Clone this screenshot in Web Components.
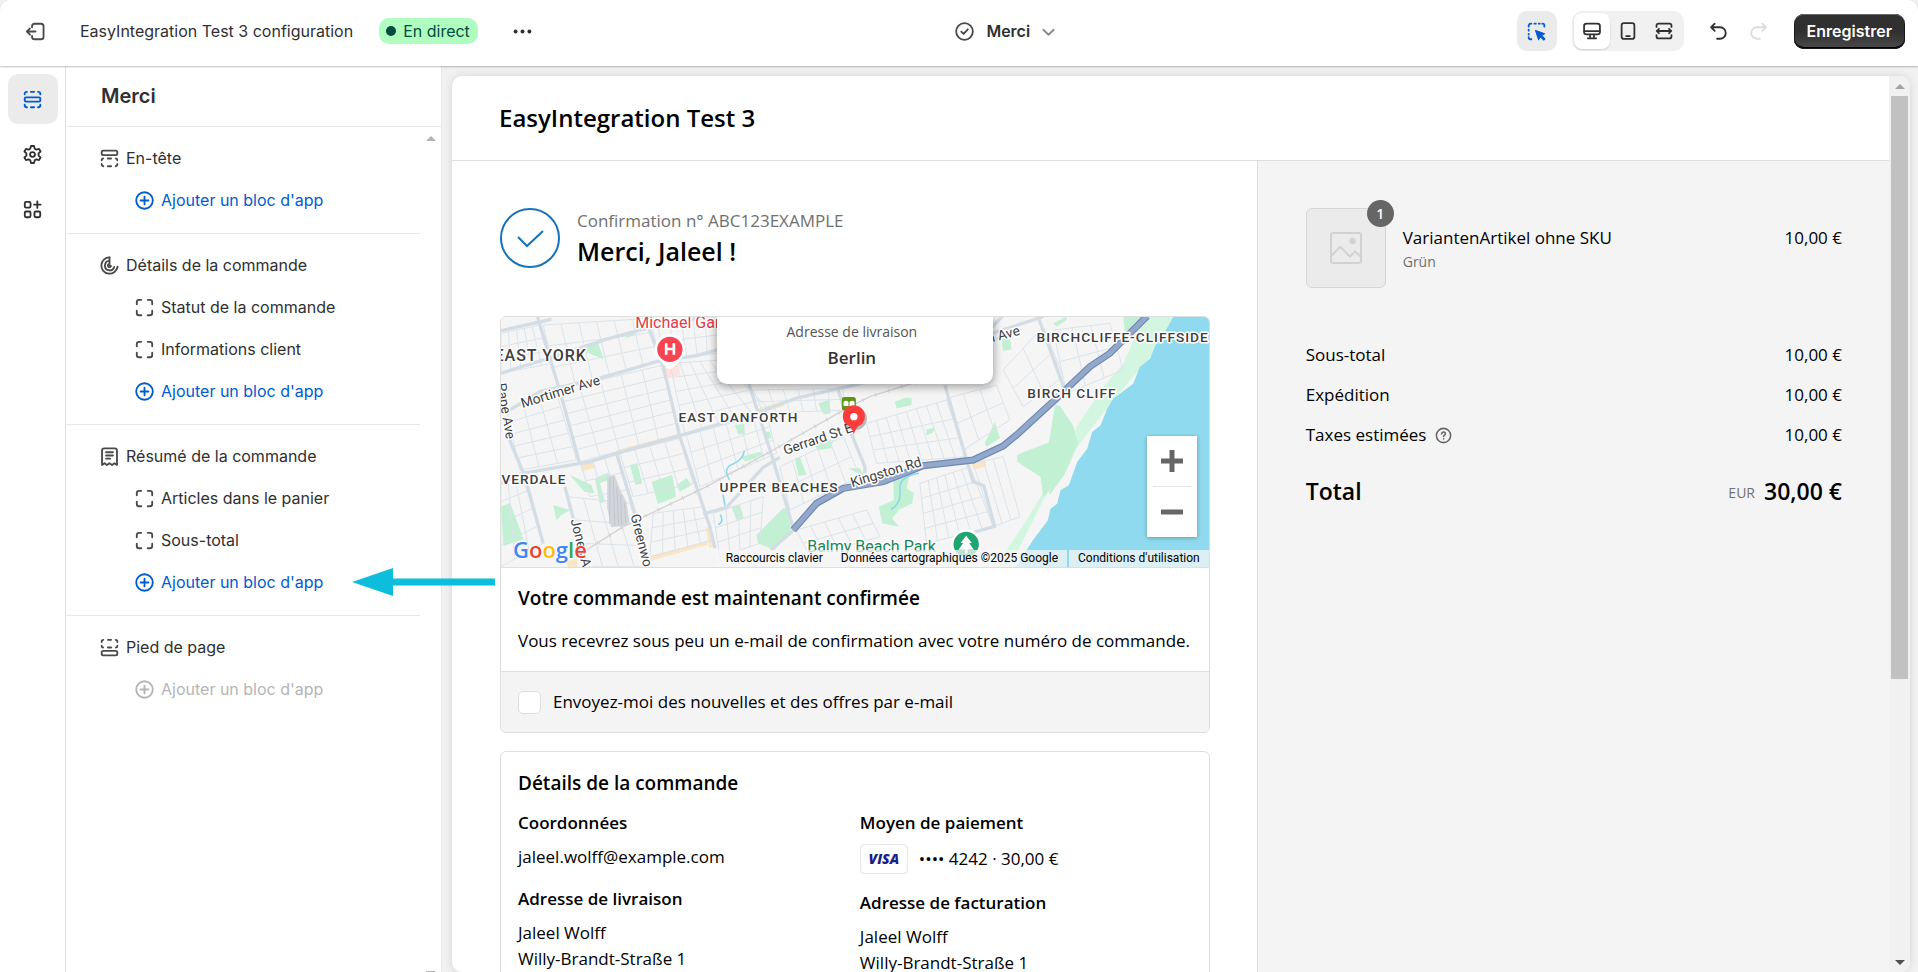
<!DOCTYPE html>
<html lang="fr">
<head>
<meta charset="utf-8">
<meta name="viewport" content="width=device-width, initial-scale=1">
<title>EasyIntegration Test 3 configuration</title>
<style>
  html, body {
    height: 100%;
    margin: 0;
  }

  body {
    overflow: hidden;
    background: #f1f1f1;
    font-family: Inter, "Liberation Sans", sans-serif;
    font-size: 16px;
    color: #303030;
  }
</style>
</head>
<body>
<theme-editor></theme-editor>

<script>
const ICONS = {
  exit: `<path d="M2.500 10h7.500M5.200 7.300 2.500 10l2.700 2.700"/><path d="M7 6.200V5.500a2.250 2.250 0 0 1 2.250-2.250h5.500A2.250 2.250 0 0 1 17 5.500v9a2.250 2.250 0 0 1-2.250 2.250h-5.500A2.250 2.250 0 0 1 7 14.500v-.7"/>`,
  dots: `<g fill="currentColor" stroke="none"><circle cx="4" cy="10" r="1.700"/><circle cx="10" cy="10" r="1.700"/><circle cx="16" cy="10" r="1.700"/></g>`,
  check: `<circle cx="10" cy="10" r="7.250"/><path d="m7.200 10.100 2 2 3.700-4"/>`,
  chevron: `<path d="m5.500 8.500 4.500 4.300 4.500-4.300"/>`,
  sections: `<rect x="3.200" y="8.200" width="13.600" height="3.600" rx="1.200"/><path d="M3.200 5.500v-.4c0-1 .8-1.800 1.800-1.800h.2M8.600 3.300h2.800M14.800 3.300h.2c1 0 1.800.8 1.800 1.800v.4M3.200 14.500v.4c0 1 .8 1.800 1.800 1.800h.2M8.600 16.700h2.800M14.800 16.700h.2c1 0 1.800-.8 1.800-1.800v-.4"/>`,
  gear: `<circle cx="10" cy="10" r="2.100"/><path d="M8.700 2.600h2.600l.6 2.300 1.500.9 2.300-.7 1.300 2.300-1.700 1.600v2l1.700 1.600-1.300 2.300-2.300-.7-1.500.9-.6 2.300H8.700l-.6-2.300-1.500-.9-2.300.7L3 12.600 4.700 11V9L3 7.400l1.300-2.300 2.300.7 1.500-.9z"/>`,
  apps: `<rect x="3.300" y="3.300" width="5" height="5" rx="1.200"/><rect x="3.300" y="11.700" width="5" height="5" rx="1.200"/><rect x="11.700" y="11.700" width="5" height="5" rx="1.200"/><path d="M14.200 3v5.600M11.400 5.800H17"/>`,
  header: `<rect x="3.200" y="3.200" width="13.600" height="3.800" rx="1.400"/><path d="M3.200 11.600v-.2c0-.9.500-1.400 1.200-1.400M8.600 10h2.800M15.600 10c.7 0 1.200.5 1.200 1.400v.2M3.200 14.700v.4c0 .9.600 1.600 1.400 1.600M8.600 16.700h2.800M15.400 16.700c.8 0 1.400-.7 1.400-1.600v-.4"/>`,
  footer: `<rect x="3.200" y="13" width="13.600" height="3.800" rx="1.400"/><path d="M3.200 8.400v.2c0 .9.500 1.400 1.200 1.400M8.600 10h2.800M15.600 10c.7 0 1.200-.5 1.200-1.400v-.2M3.200 5.300v-.4c0-.9.600-1.600 1.400-1.600M8.600 3.300h2.800M15.400 3.300c.8 0 1.400.7 1.400 1.600v.4"/>`,
  details: `<path d="M10 3v6.900"/><path d="M10 2.900a7.100 7.100 0 1 0 7 8.200"/><path d="M9.800 6a4.100 4.100 0 1 0 4.300 5.200"/><path d="M9 9a1.400 1.400 0 1 0 2.300 1.400"/>`,
  receipt: `<path d="M3.500 17.400V4.900c0-1.100.9-2 2-2h9c1.100 0 2 .9 2 2v12.500l-2.200-1.500-2.100 1.500-2.200-1.500-2.200 1.500-2.100-1.500z"/><path d="M7 6.300h6M7 9.100h6M7 11.900h3.600"/>`,
  block: `<path d="M3.300 7.200V5.300c0-1.100.9-2 2-2h1.900M12.800 3.300h1.900c1.100 0 2 .9 2 2v1.900M16.700 12.800v1.900c0 1.100-.9 2-2 2h-1.900M7.200 16.700H5.300c-1.100 0-2-.9-2-2v-1.900"/>`,
  add: `<circle cx="10" cy="10" r="7.200"/><path d="M10 6.600v6.800M6.600 10h6.800"/>`,
  inspect: `<path d="M3.200 5.700v-.8c0-.9.700-1.700 1.700-1.700h.6M8.200 3.200h1.200M12 3.200h.8M15 3.200h.6c.7 0 1.200.6 1.200 1.400v1.100M3.200 8.300v1M3.200 12v.6M3.200 15v.5c0 .7.600 1.200 1.300 1.200h1"/><path fill="currentColor" stroke-width="1" d="m9.200 9.200 7.800 2.700-2.700 1.500 3 3-1 1-3-3-1.500 2.700z"/>`,
  desktop: `<rect x="2.800" y="3.300" width="14.400" height="9.700" rx="2.200"/><path d="M3 10.200h14M8.200 13.200v3M11.800 13.200v3M6.200 16.700h7.600"/>`,
  phone: `<rect x="4.200" y="2.800" width="11.600" height="14.400" rx="2"/><path d="M8.300 14.600h3.400"/>`,
  fullwidth: `<path d="M3.200 6.300V5c0-1 .8-1.800 1.800-1.800h10c1 0 1.800.8 1.800 1.800v1.300M3.200 13.700V15c0 1 .8 1.800 1.800 1.800h10c1 0 1.800-.8 1.800-1.800v-1.300M3.400 10h13.200M5.400 8 3.400 10l2 2M14.600 8l2 2-2 2"/>`,
  undo: `<path d="M6.700 3.200 3.600 6.300l3.100 3.100M3.900 6.300h7.400a5 5 0 0 1 0 10H8.800"/>`,
  redo: `<path d="m13.300 3.200 3.100 3.100-3.100 3.100M16.100 6.300H8.700a5 5 0 0 0 0 10h2.500"/>`,
  help: `<circle cx="10" cy="10" r="7.500"/><path d="M8 8.300c0-1.100.9-1.900 2-1.900s2 .8 2 1.800c0 1.300-1.900 1.400-1.900 2.900M10.100 13.400v.3"/>`,
  image: `<rect x="2.500" y="2.500" width="15" height="15" rx="1"/><path d="m2.800 13.800 4.300-4.500 4.800 5 2.700-2.600 2.700 2.500"/><circle cx="13.300" cy="6.500" r="1.100" fill="currentColor"/>`
};

class UiIcon extends HTMLElement {
  constructor() {
    super();
    this.attachShadow({ mode: "open" });
  }

  connectedCallback() {
    this.shadowRoot.innerHTML = `
      <style>
        :host {
          display: inline-flex;
          flex: none;
          width: var(--icon-size, 23px);
          height: var(--icon-size, 23px);
        }

        svg {
          width: 100%;
          height: 100%;
          fill: none;
          stroke: currentColor;
          stroke-width: var(--icon-stroke, 1.6);
          stroke-linecap: round;
          stroke-linejoin: round;
        }
      </style>
      <svg viewBox="0 0 20 20" aria-hidden="true">${ICONS[this.getAttribute("name")] || ""}</svg>
    `;
  }
}

customElements.define("ui-icon", UiIcon);

class EditorTopbar extends HTMLElement {
  constructor() {
    super();
    this.attachShadow({ mode: "open" });
  }

  connectedCallback() {
    this.shadowRoot.innerHTML = `
      <style>
        :host {
          display: grid;
          grid-template-columns: 11fr auto 10fr;
          align-items: center;
          height: 66px;
          box-sizing: border-box;
          padding: 0 13px 4px 24px;
          background: #fff;
          border-radius: 10px 10px 0 0;
          box-shadow: 0 1px 2px rgba(0, 0, 0, 0.25);
          position: relative;
          z-index: 3;
        }

        button {
          display: inline-flex;
          align-items: center;
          justify-content: center;
          padding: 0;
          border: 0;
          background: none;
          color: #303030;
          font: inherit;
        }

        .left, .right {
          display: flex;
          align-items: center;
        }

        .right {
          justify-content: flex-end;
        }

        .exit {
          color: #4a4a4a;
          margin-right: 33px;
        }

        .badge {
          display: inline-flex;
          align-items: center;
          gap: 7px;
          height: 26px;
          padding: 0 8px 0 7px;
          margin: 0 33px 0 26px;
          border-radius: 10px;
          background: #affebf;
          color: #014b40;
        }

        .badge::before {
          content: "";
          width: 10px;
          height: 10px;
          border-radius: 5px;
          background: #014b40;
        }

        .page {
          gap: 10px;
          font-weight: 600;
        }

        .page ui-icon {
          color: #4a4a4a;
        }

        .page ui-icon:last-child {
          color: #8a8a8a;
          margin-left: -3px;
        }

        .inspect {
          width: 40px;
          height: 40px;
          border-radius: 10px;
          background: #ebebeb;
          color: #005bd3;
        }

        .devices {
          display: flex;
          align-items: center;
          margin: 0 15px;
          padding: 2px;
          border-radius: 10px;
          background: #f1f1f1;
          --icon-size: 22px;
        }

        .devices button {
          width: 36px;
          height: 36px;
          border-radius: 8px;
        }

        .devices button[aria-pressed="true"] {
          background: #fff;
          box-shadow: 0 1px 2px rgba(0, 0, 0, 0.15);
        }

        .history {
          width: 40px;
          height: 40px;
        }

        .history:disabled {
          color: #dcdcdc;
        }

        .save {
          height: 35px;
          margin-left: 15px;
          padding: 0 13px;
          border-radius: 10px;
          background: linear-gradient(#303030 50%, #4a4a4a);
          box-shadow: inset 0 1px 0 #6a6a6a, inset 0 0 0 1px #1a1a1a, inset 0 -2px 0 #000;
          color: #fff;
          font-weight: 600;
        }
      </style>
      <div class="left">
        <button class="exit" aria-label="Quitter"><ui-icon name="exit"></ui-icon></button>
        <span>EasyIntegration Test 3 configuration</span>
        <span class="badge">En direct</span>
        <button aria-label="Plus d'actions"><ui-icon name="dots"></ui-icon></button>
      </div>
      <button class="page"><ui-icon name="check"></ui-icon>Merci<ui-icon name="chevron"></ui-icon></button>
      <div class="right">
        <button class="inspect" aria-label="Inspecteur"><ui-icon name="inspect"></ui-icon></button>
        <div class="devices">
          <button aria-label="Ordinateur" aria-pressed="true"><ui-icon name="desktop"></ui-icon></button>
          <button aria-label="Mobile" aria-pressed="false"><ui-icon name="phone"></ui-icon></button>
          <button aria-label="Pleine largeur" aria-pressed="false"><ui-icon name="fullwidth"></ui-icon></button>
        </div>
        <button class="history" aria-label="Annuler"><ui-icon name="undo"></ui-icon></button>
        <button class="history" aria-label="Rétablir" disabled><ui-icon name="redo"></ui-icon></button>
        <button class="save">Enregistrer</button>
      </div>
    `;
  }
}

customElements.define("editor-topbar", EditorTopbar);

class EditorRail extends HTMLElement {
  constructor() {
    super();
    this.attachShadow({ mode: "open" });
  }

  connectedCallback() {
    this.shadowRoot.innerHTML = `
      <style>
        :host {
          display: block;
          width: 65px;
          box-sizing: content-box;
          border-right: 1px solid #e3e3e3;
          background: #fff;
        }

        nav {
          display: flex;
          flex-direction: column;
          align-items: center;
          gap: 5px;
          padding-top: 8px;
        }

        button {
          display: flex;
          align-items: center;
          justify-content: center;
          width: 50px;
          height: 50px;
          padding: 0;
          border: 0;
          border-radius: 10px;
          background: none;
          color: #303030;
        }

        button[aria-current] {
          background: #ebebeb;
          color: #005bd3;
        }
      </style>
      <nav>
        <button aria-label="Sections" aria-current="page"><ui-icon name="sections"></ui-icon></button>
        <button aria-label="Paramètres"><ui-icon name="gear"></ui-icon></button>
        <button aria-label="Applications"><ui-icon name="apps"></ui-icon></button>
      </nav>
    `;
  }
}

customElements.define("editor-rail", EditorRail);

class TreeRow extends HTMLElement {
  constructor() {
    super();
    this.attachShadow({ mode: "open" });
  }

  connectedCallback() {
    const disabled = this.hasAttribute("disabled") ? "disabled" : "";

    this.shadowRoot.innerHTML = `
      <style>
        :host {
          display: block;
          position: relative;
        }

        button {
          display: flex;
          align-items: center;
          gap: 5px;
          width: 100%;
          height: 42px;
          padding: 0 0 0 67px;
          border: 0;
          background: none;
          color: #303030;
          font: inherit;
          text-align: left;
        }

        ui-icon {
          color: #4a4a4a;
        }

        :host([kind="section"]) button {
          padding-left: 32px;
        }

        :host([kind="add"]) button,
        :host([kind="add"]) ui-icon {
          color: #005bd3;
        }

        :host([kind="add"]) button:disabled,
        :host([kind="add"]) button:disabled ui-icon {
          color: #b5b5b5;
        }

        /* pointer laid over the preview */
        .pointer {
          display: none;
          position: absolute;
          left: 286px;
          top: 7px;
          width: 143px;
          height: 28px;
        }

        :host([pointed]) .pointer {
          display: block;
        }
      </style>
      <button ${disabled}><ui-icon name="${this.getAttribute("icon")}"></ui-icon><slot></slot></button>
      <svg class="pointer" viewBox="0 0 143 28" aria-hidden="true">
        <path d="M0 14 41 0v10.500h102v7H41V28z" fill="#0dbddc"/>
      </svg>
    `;
  }
}

customElements.define("tree-row", TreeRow);

class SectionTree extends HTMLElement {
  constructor() {
    super();
    this.attachShadow({ mode: "open" });
  }

  connectedCallback() {
    this.shadowRoot.innerHTML = `
      <style>
        :host {
          display: flex;
          flex-direction: column;
          width: 375px;
          border-right: 1px solid #e8e8e8;
          background: #fff;
          position: relative;
          z-index: 2;
        }

        h2 {
          margin: 0;
          padding: 0 35px;
          border-bottom: 1px solid #e8e8e8;
          font-size: 20px;
          line-height: 60px;
          font-weight: 600;
        }

        .body {
          display: flex;
          flex: 1;
          justify-content: space-between;
        }

        .groups {
          flex: 1;
        }

        section {
          padding: 10px 0 12px;
          border-bottom: 1px solid #e8e8e8;
        }

        section:last-child {
          border-bottom: 0;
        }

        .track {
          display: flex;
          flex-direction: column;
          justify-content: space-between;
          align-items: center;
          width: 21px;
          padding-top: 9px;
        }

        .track::before {
          content: "";
          border: 5px solid transparent;
          border-top-width: 0;
          border-bottom-color: #b2b2b2;
        }

        .track::after {
          content: "";
          width: 9px;
          height: 1px;
          background: #b2b2b2;
        }
      </style>
      <h2>Merci</h2>
      <div class="body">
        <div class="groups">
          <section>
            <tree-row kind="section" icon="header">En-tête</tree-row>
            <tree-row kind="add" icon="add">Ajouter un bloc d'app</tree-row>
          </section>
          <section>
            <tree-row kind="section" icon="details">Détails de la commande</tree-row>
            <tree-row icon="block">Statut de la commande</tree-row>
            <tree-row icon="block">Informations client</tree-row>
            <tree-row kind="add" icon="add">Ajouter un bloc d'app</tree-row>
          </section>
          <section>
            <tree-row kind="section" icon="receipt">Résumé de la commande</tree-row>
            <tree-row icon="block">Articles dans le panier</tree-row>
            <tree-row icon="block">Sous-total</tree-row>
            <tree-row kind="add" icon="add" pointed>Ajouter un bloc d'app</tree-row>
          </section>
          <section>
            <tree-row kind="section" icon="footer">Pied de page</tree-row>
            <tree-row kind="add" icon="add" disabled>Ajouter un bloc d'app</tree-row>
          </section>
        </div>
        <div class="track"></div>
      </div>
    `;
  }
}

customElements.define("section-tree", SectionTree);

// Minor streets: straight lines across a quad [a, b, c, d], clockwise from top left
function streets([a, b, c, d], across, down) {
  const mix = (p, q, t) => [Math.round(p[0] + (q[0] - p[0]) * t), Math.round(p[1] + (q[1] - p[1]) * t)];
  let path = "";
  for (let i = 0; i <= across; i++) {
    path += `M${mix(a, b, i / across)}L${mix(d, c, i / across)}`;
  }
  for (let i = 0; i <= down; i++) {
    path += `M${mix(a, d, i / down)}L${mix(b, c, i / down)}`;
  }
  return path;
}

const STREETS = [
  streets([[33, 70], [150, 45], [185, 160], [33, 190]], 5, 3),
  streets([[160, 45], [480, 25], [510, 150], [205, 235]], 6, 3),
  streets([[500, 40], [683, 20], [683, 130], [530, 150]], 5, 2),
  streets([[205, 240], [520, 165], [565, 375], [270, 455]], 5, 6),
  streets([[50, 300], [200, 250], [260, 450], [90, 480]], 3, 5),
  streets([[540, 160], [690, 150], [840, 300], [585, 370]], 5, 5),
  streets([[275, 465], [380, 435], [410, 540], [300, 560]], 3, 2),
  streets([[390, 430], [570, 385], [610, 520], [430, 560]], 4, 3),
  streets([[33, 510], [95, 490], [160, 700], [33, 770]], 3, 4),
  streets([[235, 560], [420, 580], [480, 770], [290, 770]], 4, 3),
  streets([[490, 610], [640, 590], [670, 690], [480, 740]], 5, 3),
  streets([[590, 375], [830, 310], [860, 430], [630, 530]], 6, 3),
  streets([[670, 610], [820, 560], [810, 700], [690, 740]], 4, 3),
  streets([[870, 470], [1060, 380], [1110, 500], [900, 600]], 5, 2),
  streets([[790, 240], [1060, 235], [1060, 300], [820, 310]], 6, 2),
  streets([[1130, 340], [1370, 270], [1430, 440], [1160, 460]], 8, 3),
  streets([[1290, 520], [1440, 470], [1510, 650], [1310, 700]], 6, 4),
  streets([[1450, 460], [1540, 440], [1590, 620], [1510, 650]], 3, 1),
  streets([[1370, 265], [1520, 225], [1560, 330], [1420, 420]], 3, 2),
  streets([[1540, 180], [1660, 50], [1720, 200], [1600, 290]], 2, 2),
  streets([[1690, 60], [1860, 40], [1900, 180], [1730, 250]], 3, 2),
  streets([[920, 660], [1130, 600], [1170, 680], [960, 740]], 5, 2)
].join("");

class OrderMap extends HTMLElement {
  constructor() {
    super();
    this.attachShadow({ mode: "open" });
  }

  connectedCallback() {
    this.shadowRoot.innerHTML = `
      <style>
        :host {
          display: block;
          position: relative;
          height: 250px;
          overflow: hidden;
          background: #f5f5f5;
          font-family: Roboto, "Liberation Sans", sans-serif;
        }

        .map {
          display: block;
          width: 100%;
          height: 100%;
        }

        .map text {
          fill: #3c4043;
          stroke: #fff;
          stroke-width: 9px;
          stroke-linejoin: round;
          paint-order: stroke;
          font-size: 41px;
        }

        .map .area {
          font-weight: 500;
          letter-spacing: 3px;
        }

        .map .district,
        .map .place {
          font-size: 48px;
        }

        .map .park {
          fill: #16855a;
        }

        .map .hospital {
          fill: #e23b4b;
        }

        .bubble {
          position: absolute;
          top: 0;
          left: 50%;
          width: 276px;
          height: 67px;
          margin-left: -138px;
          box-sizing: border-box;
          padding: 2px 6px 0 0;
          border-radius: 0 0 10px 10px;
          background: #fff;
          box-shadow: 0 2px 8px 1px rgba(0, 0, 0, 0.35);
          color: #545454;
          font-family: "Open Sans", "Noto Sans", sans-serif;
          font-size: 14px;
          line-height: 26px;
          text-align: center;
        }

        .bubble strong {
          display: block;
          color: #333;
          font-size: 17px;
          font-weight: 600;
        }

        .zoom {
          position: absolute;
          right: 12px;
          bottom: 30px;
          width: 50px;
          background: #fff;
          box-shadow: 0 1px 4px rgba(0, 0, 0, 0.3);
        }

        .zoom button {
          display: flex;
          align-items: center;
          justify-content: center;
          width: 50px;
          height: 50px;
          padding: 0;
          border: 0;
          background: none;
          color: #666;
        }

        .zoom hr {
          height: 1px;
          margin: 0 6px;
          border: 0;
          background: #e6e6e6;
        }

        .google {
          position: absolute;
          left: 12px;
          bottom: 2px;
          color: #4285f4;
          font-family: "Open Sans", sans-serif;
          font-size: 22px;
          font-weight: 600;
          line-height: 32px;
          text-decoration: none;
          text-shadow: 0 0 2px #fff, 0 0 2px #fff, 0 0 3px #fff;
        }

        .r { color: #ea4335; }
        .y { color: #fbbc05; }
        .g { color: #34a853; }
        .b { color: #4285f4; }

        .credits {
          position: absolute;
          right: 0;
          bottom: 0;
          display: flex;
          gap: 2px;
          font-size: 12px;
          line-height: 17px;
          color: #000;
        }

        .credits > * {
          padding: 0 9px;
          border: 0;
          background: rgba(245, 245, 245, 0.75);
          color: #000;
          font: inherit;
          text-decoration: none;
        }

        .credits .keys {
          margin-right: -2px;
        }
      </style>
      <svg class="map" viewBox="33 21 2124 750" preserveAspectRatio="xMidYMid slice" role="img" aria-label="Plan">
        <rect x="0" y="0" width="2200" height="800" fill="#f5f5f5"/>
        <g fill="#c1f0d3">
          <path d="M405 70l28-8 2 14-26 8zM285 105l40-8 15 50-50-20zM33 590l28-12 40 110-60 20zM240 495l65 30 8 25-30-5zM315 505l45-20-5 25-25 10 15 55-15 5zM420 465l22-5 15 60-20 5zM485 515l62-20 12 65-55 22zM560 525l30-20 15 20-35 20zM190 585l50 15-25 15-15 15zM735 345l28-2 2 30-20 0zM985 280l32-10 6 40-22 3zM970 405l60-15-5 25-40 5zM915 445l15-5 20 55-25 2zM800 675l80-80 12 0 12 65-50 60-50-20zM725 590l25-5 12 40-22 5zM752 440l60-15 5 10-50 20zM825 365l15 0 5 20-15 2zM1075 475l35 0 15 25-20-10z"/>
          <path d="M1215 275l30-12 20 0 0 22-45 10zM1310 358l24-5-5 15-20 8zM1485 400l30-65 15 50-40 25zM1535 90l25-12 5 40-25 5zM1900 21l65 0-20 30-40 15zM1690 40l40-20 0 10-30 20zM1695 285l15 2 40 60 15 55-40 90-45 62-10-60-20-15-62-25 0-22 90-35zM1210 500l50-5-10 40 22 15-5 30-40 20-20 25 20 25-50-10-10-50 45-20z"/>
        </g>
        <path fill="#d3f6e1" d="M1960 21h100l-80 120-110 130-100 130-110 170-100 200h-20l10-50 60-90 60-100 60-100 30-80 80-120 60-70 40-90z"/>
        <path fill="#c1f0d3" d="M1700 290l45 50 20 60-60 110-45 50-8-60-70-45 0-20 95-35z"/>
        <path fill="#8fdaee" d="M2050 21l-25 45-20 20-25 60-30 25-20 50-60 45-18 30-20 50-25 20-15 50-30 40-25 70-25 15-10 40-20 15-8 35-45 60-45 70-30 30-20 55H2160V21z"/>
        <path fill="#fae6c4" d="M380 420l190-50 4 14-190 50zM270 460l40-6 4 20-38 10zM800 296l80-22 4 14-80 22zM1443 455l42-6 6 20-40 10zM480 740l170-48 4 12-170 48zM648 652l12-2 10 60-12 4zM230 755l30-8 4 24h-30z"/>
        <path fill="#ffe2e0" d="M512 168l52-16 8 44-48 10z"/>

        <path fill="none" stroke="#dbe3ea" stroke-width="3" d="${STREETS}"/>

        <g fill="none" stroke="#d3dde5" stroke-width="10">
          <path d="M33 62 185 28M33 190l165-52 150-50 110-30 190-38"/>
          <path d="M60 300l90-55 180-40 170-50 120-18 70-20M33 520l67-30 200-35 80-25 190-53 230-68 120-45 180-40 270-65 90-30 30-60 90-95 40-15"/>
          <path d="M143 21l72 239 54 200M380 430l55 180 50 170M475 50l45 120 50 210 90 270 15 65M775 215l75 235 62 210-70 60"/>
          <path d="M55 380l50 120 55 200M225 530l45 170 25 80M640 612l70-20 110-120 50-30"/>
          <path d="M1365 225l65 225 20 65 32 12 32 122-120 35M1645 21l78 215M1080 360l45 110v20M1045 240l45 140M1430 95l230-75"/>
        </g>
        <path fill="#d2d5da" d="M352 500l22-5 15 40 20 40 10 60-15 12-40 5-12-60z"/>
        <path fill="none" stroke="#c3c7cd" stroke-width="3" d="M360 502v140M370 500l5 145M381 530l5 115M393 555l2 90M404 580l4 60"/>
        <g fill="none" stroke="#d3d3d3" stroke-width="4">
          <path d="M290 720l110-70 250-120 200-110 230-130 60-30 160-50 140-80 100-55"/>
          <path stroke-width="12" stroke-dasharray="3 38" d="M290 720l110-70 250-120 200-110 230-130 60-30 160-50 140-80"/>
        </g>
        <g fill="none" stroke="#8cd9ee" stroke-width="5" stroke-linecap="round">
          <path d="M763 425q-5 25-35 38t-10 45M700 555l5 30M692 615q10 20-5 28M1285 490q-60 10-55 50t-25 57"/>
        </g>
        <path fill="none" stroke="#6f88b5" stroke-width="21" d="M910 660l70-80 80-45 120-20 120-48 150-17 90-42 40-33 120-110 100-95 60-40 112-112"/>
        <path fill="none" stroke="#93a9cc" stroke-width="14" d="M910 660l70-80 80-45 120-20 120-48 150-17 90-42 40-33 120-110 100-95 60-40 112-112"/>

        <g>
          <text class="area district" x="14" y="153">EAST YORK</text>
          <text class="area" x="566" y="337">EAST DANFORTH</text>
          <text class="area" x="20" y="521">IVERDALE</text>
          <text class="area" x="689" y="545">UPPER BEACHES</text>
          <text class="area" x="1640" y="97">BIRCHCLIFFE-CLIFFSIDE</text>
          <text class="area" x="1612" y="264">BIRCH CLIFF</text>
          <text transform="translate(98 294) rotate(-17)">Mortimer Ave</text>
          <text transform="translate(886 435) rotate(-19)">Gerrard St E</text>
          <text transform="translate(1087 532) rotate(-17)">Kingston Rd</text>
          <text transform="translate(1496 100) rotate(-15)">h Ave</text>
          <text transform="translate(20 222) rotate(80)">Pape Ave</text>
          <text transform="translate(242 630) rotate(76)">Jones Ave</text>
          <text transform="translate(422 616) rotate(76)">Greenwood</text>
          <text class="place hospital" x="436" y="53">Michael Garron</text>
          <text class="place park" x="952" y="727">Balmy Beach Park</text>
        </g>

        <path fill="#fff" d="M540 72a45 45 0 0 1 33 76l-24 25q-9 8-18 0l-24-25a45 45 0 0 1 33-76z"/>
        <circle cx="540" cy="118" r="38" fill="#f94552"/>
        <path stroke="#fff" stroke-width="8" fill="none" d="M529 100v34M552 100v34M529 117h23"/>
        <circle cx="1429" cy="703" r="45" fill="#fff"/>
        <circle cx="1429" cy="703" r="38" fill="#1ea672"/>
        <path fill="#fff" d="M1429 677l17 22h-8l14 20h-19v12h-8v-12h-19l14-20h-8z"/>
        <rect x="1056" y="261" width="42" height="40" rx="8" fill="#5f9416"/>
        <path fill="#fff" d="M1061 276q8-8 15 0v12h-15zM1079 276q8-8 15 0v12h-15z"/>
        <ellipse cx="1096" cy="326" rx="35" ry="34" fill="#000" opacity=".25"/>
        <path fill="#ff3c3c" d="M1092 373q-7-24-20-28a33 33 0 1 1 40 0q-13 4-20 28z"/>
        <circle cx="1092" cy="320" r="11" fill="#fff"/>
      </svg>
      <div class="bubble">Adresse de livraison<strong>Berlin</strong></div>
      <a class="google" href="#">G<span class="r">o</span><span class="y">o</span><span class="b">g</span><span class="g">l</span><span class="r">e</span></a>
      <div class="zoom">
        <button aria-label="Zoom avant"><svg width="22" height="22"><path d="M11 0v22M0 11h22" stroke="currentColor" stroke-width="5"/></svg></button>
        <hr>
        <button aria-label="Zoom arrière"><svg width="22" height="22"><path d="M0 11h22" stroke="currentColor" stroke-width="5"/></svg></button>
      </div>
      <div class="credits">
        <button class="keys">Raccourcis clavier</button>
        <span>Données cartographiques ©2025 Google</span>
        <a href="#">Conditions d'utilisation</a>
      </div>
    `;
  }
}

customElements.define("order-map", OrderMap);

class CheckoutCard extends HTMLElement {
  constructor() {
    super();
    this.attachShadow({ mode: "open" });
  }

  connectedCallback() {
    this.shadowRoot.innerHTML = `
      <style>
        :host {
          display: block;
          flex: none;
          border: 1px solid #dedede;
          border-radius: 6px;
          overflow: hidden;
          background: #fff;
        }
      </style>
      <slot></slot>
    `;
  }
}

customElements.define("checkout-card", CheckoutCard);

class OrderSummary extends HTMLElement {
  constructor() {
    super();
    this.attachShadow({ mode: "open" });
  }

  connectedCallback() {
    this.shadowRoot.innerHTML = `
      <style>
        :host {
          display: block;
          padding: 47px 47px 0 48px;
          border-left: 1px solid #dedede;
          background: #f4f4f4;
        }

        .product {
          display: flex;
          align-items: center;
          gap: 17px;
          margin-bottom: 54px;
        }

        .thumb {
          display: flex;
          align-items: center;
          justify-content: center;
          width: 80px;
          height: 80px;
          box-sizing: border-box;
          border: 1px solid #d6d6d6;
          border-radius: 6px;
          background: #ebebeb;
          color: #d2d2d2;
          position: relative;
          --icon-size: 40px;
          --icon-stroke: 1;
        }

        .count {
          position: absolute;
          top: -9px;
          right: -9px;
          width: 27px;
          height: 27px;
          border-radius: 14px;
          background: #666;
          color: #fff;
          font-size: 14px;
          font-weight: 600;
          line-height: 27px;
          text-align: center;
        }

        .name {
          flex: 1;
          padding-top: 2px;
        }

        .name p {
          margin: 0;
        }

        .name p + p {
          color: #707070;
          font-size: 14px;
          line-height: 22px;
        }

        .price {
          align-self: flex-start;
          padding-top: 17px;
        }

        dl {
          display: grid;
          grid-template-columns: 1fr auto;
          row-gap: 14px;
          margin: 0;
        }

        dt, dd {
          display: flex;
          align-items: center;
          margin: 0;
        }

        dd {
          justify-content: flex-end;
        }

        dt button {
          display: flex;
          margin-left: 8px;
          padding: 0;
          border: 0;
          background: none;
          color: #666;
          --icon-size: 19px;
        }

        .total {
          margin-top: 12px;
          font-size: 23px;
          font-weight: 600;
          line-height: 30px;
        }

        dd.total {
          gap: 9px;
        }

        .total small {
          padding-top: 4px;
          color: #707070;
          font-size: 14px;
          font-weight: 400;
        }
      </style>
      <div class="product">
        <div class="thumb"><ui-icon name="image"></ui-icon><span class="count">1</span></div>
        <div class="name"><p>VariantenArtikel ohne SKU</p><p>Grün</p></div>
        <span class="price">10,00 €</span>
      </div>
      <dl>
        <dt>Sous-total</dt><dd>10,00 €</dd>
        <dt>Expédition</dt><dd>10,00 €</dd>
        <dt>Taxes estimées<button aria-label="Aide"><ui-icon name="help"></ui-icon></button></dt><dd>10,00 €</dd>
        <dt class="total">Total</dt><dd class="total"><small>EUR</small>30,00 €</dd>
      </dl>
    `;
  }
}

customElements.define("order-summary", OrderSummary);

class CheckoutPreview extends HTMLElement {
  constructor() {
    super();
    this.attachShadow({ mode: "open" });
  }

  connectedCallback() {
    this.shadowRoot.innerHTML = `
      <style>
        :host {
          display: flex;
          flex: 1;
          min-width: 0;
          margin: 10px 8px 0 10px;
          border-radius: 10px;
          overflow: hidden;
          background: #fff;
          box-shadow: 0 0 8px rgba(0, 0, 0, 0.12);
          color: #000;
          font-family: "Open Sans", "Noto Sans", sans-serif;
          font-size: 17px;
          line-height: 26px;
        }

        .page {
          display: flex;
          flex: 1;
          flex-direction: column;
          min-width: 0;
        }

        header {
          padding: 24px 47px 25px;
          border-bottom: 1px solid #dedede;
        }

        h1, h2, h3, p {
          margin: 0;
        }

        h1 {
          font-size: 24px;
          line-height: 35px;
          font-weight: 600;
        }

        .columns {
          display: grid;
          flex: 1;
          grid-template-columns: minmax(0, 14fr) minmax(0, 11fr);
        }

        main {
          display: flex;
          flex-direction: column;
          gap: 18px;
          padding: 47px 47px 0 48px;
          height: 0;
        }

        .thanks {
          display: flex;
          flex: none;
          align-items: center;
          gap: 17px;
          margin-bottom: 30px;
        }

        .thanks svg {
          flex: none;
          width: 60px;
          height: 60px;
        }

        .thanks p {
          color: #707070;
        }

        .thanks h2 {
          font-size: 25px;
          line-height: 34px;
          font-weight: 600;
        }

        h3 {
          font-size: 17px;
          font-weight: 600;
        }

        .pane {
          padding: 17px;
        }

        .confirm {
          border-top: 1px solid #dedede;
        }

        .confirm h3 {
          margin-bottom: 17px;
          font-size: 19px;
        }

        .muted {
          border-top: 1px solid #dedede;
          background: #f4f4f4;
        }

        .optin {
          display: flex;
          align-items: center;
          gap: 12px;
        }

        .optin input {
          appearance: none;
          width: 23px;
          height: 23px;
          margin: 0;
          border: 1px solid #dedede;
          border-radius: 5px;
          background: #fff;
        }

        .details > h2 {
          margin-bottom: 13px;
          font-size: 19px;
          line-height: 28px;
          font-weight: 600;
        }

        .facts {
          display: grid;
          grid-template-columns: 1fr 1fr;
          column-gap: 10px;
        }

        .facts h3 {
          margin-bottom: 8px;
        }

        .facts p {
          margin-bottom: 16px;
        }

        .facts p:last-child {
          margin-bottom: 0;
        }

        .pay {
          display: flex;
          align-items: center;
          gap: 11px;
        }

        .visa {
          width: 46px;
          height: 28px;
          border: 1px solid #e6e6e6;
          border-radius: 4px;
          color: #1a1f8a;
          font-size: 14px;
          font-style: italic;
          font-weight: 800;
          line-height: 28px;
          text-align: center;
        }

        .scroll {
          display: flex;
          flex: none;
          flex-direction: column;
          align-items: center;
          width: 21px;
          background: #f1f1f1;
        }

        .scroll i {
          border: 5px solid transparent;
        }

        .scroll .up {
          margin: 8px 0 7px;
          border-top-width: 0;
          border-bottom-color: #a3a3a3;
        }

        .scroll .down {
          margin: 7px 0;
          border-bottom-width: 0;
          border-top-color: #505050;
        }

        .rail {
          flex: 1;
        }

        .thumb {
          width: 17px;
          height: 68%;
          background: #c1c1c1;
        }
      </style>
      <div class="page">
        <header><h1>EasyIntegration Test 3</h1></header>
        <div class="columns">
          <main>
            <div class="thanks">
              <svg viewBox="0 0 60 60" fill="none" stroke="#1773b9" stroke-width="2" aria-hidden="true">
                <circle cx="30" cy="30" r="29"/>
                <path d="m18 29 9 9 16-15"/>
              </svg>
              <div><p>Confirmation n° ABC123EXAMPLE</p><h2>Merci, Jaleel !</h2></div>
            </div>
            <checkout-card>
              <order-map></order-map>
              <div class="pane confirm">
                <h3>Votre commande est maintenant confirmée</h3>
                <p>Vous recevrez sous peu un e-mail de confirmation avec votre numéro de commande.</p>
              </div>
              <div class="pane muted">
                <label class="optin"><input type="checkbox">Envoyez-moi des nouvelles et des offres par e-mail</label>
              </div>
            </checkout-card>
            <checkout-card>
              <div class="pane details">
                <h2>Détails de la commande</h2>
                <div class="facts">
                  <div>
                    <h3>Coordonnées</h3>
                    <p>jaleel.wolff@example.com</p>
                    <h3>Adresse de livraison</h3>
                    <p>Jaleel Wolff<br>Willy-Brandt-Straße 1</p>
                  </div>
                  <div>
                    <h3>Moyen de paiement</h3>
                    <p class="pay"><span class="visa">VISA</span>•••• 4242 · 30,00 €</p>
                    <h3>Adresse de facturation</h3>
                    <p>Jaleel Wolff<br>Willy-Brandt-Straße 1</p>
                  </div>
                </div>
              </div>
            </checkout-card>
          </main>
          <order-summary></order-summary>
        </div>
      </div>
      <div class="scroll"><i class="up"></i><div class="rail"><div class="thumb"></div></div><i class="down"></i></div>
    `;
  }
}

customElements.define("checkout-preview", CheckoutPreview);

class ThemeEditor extends HTMLElement {
  constructor() {
    super();
    this.attachShadow({ mode: "open" });
  }

  connectedCallback() {
    this.shadowRoot.innerHTML = `
      <style>
        :host {
          display: flex;
          flex-direction: column;
          height: 100vh;
        }

        .workspace {
          display: flex;
          flex: 1;
          min-height: 0;
        }
      </style>
      <editor-topbar></editor-topbar>
      <div class="workspace">
        <editor-rail></editor-rail>
        <section-tree></section-tree>
        <checkout-preview></checkout-preview>
      </div>
    `;
  }
}

customElements.define("theme-editor", ThemeEditor);
</script>
</body>
</html>
